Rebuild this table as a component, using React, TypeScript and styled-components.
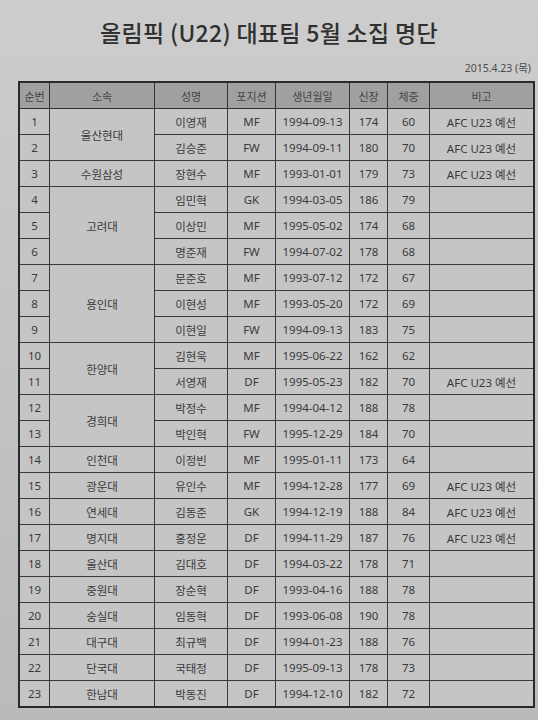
import React from 'react';
import styled, { createGlobalStyle } from 'styled-components';

const GlobalStyle = createGlobalStyle`
  html, body {
    margin: 0;
    padding: 0;
  }
  body {
    width: 538px;
    height: 720px;
    overflow: hidden;
    background: linear-gradient(180deg, #cdcdcd 0%, #c4c4c4 45%, #bababa 100%);
    font-family: "Noto Sans", "Noto Sans CJK KR", sans-serif;
    color: #333;
  }
`;

const Page = styled.div`
  display: flex;
  flex-direction: column;
  padding: 17px 0 0 0;
`;

const Title = styled.h1`
  margin: 0;
  text-align: center;
  font-family: "Noto Sans CJK KR", sans-serif;
  font-size: 23px;
  font-weight: 500;
  line-height: 30px;
  color: #303030;
  letter-spacing: 0.3px;
`;

const DateLine = styled.div`
  margin: 14px 7px 0 0;
  text-align: right;
  font-family: "Noto Sans", "Noto Sans CJK KR", sans-serif;
  font-size: 10.5px;
  line-height: 14px;
  color: #4a4a4a;
`;

const Sheet = styled.table`
  margin: 6px 0 0 18px;
  width: 506px;
  border-collapse: collapse;
  table-layout: fixed;
  border: 2px solid #2a2a2a;
`;

const HeadCell = styled.th<{ $w: number }>`
  width: ${(p) => p.$w}px;
  height: 25px;
  padding: 0;
  background: #a0a0a0;
  border: 1px solid #333;
  font-family: "Noto Sans CJK KR", sans-serif;
  font-size: 11px;
  font-weight: 400;
  color: #444;
  text-align: center;
`;

const Cell = styled.td<{ $kr?: boolean }>`
  height: 25px;
  padding: 0;
  border: 1px solid #3a3a3a;
  background: #c5c5c5;
  font-family: ${(p) =>
    p.$kr ? '"Noto Sans CJK KR", sans-serif' : '"Noto Sans", "Noto Sans CJK KR", sans-serif'};
  font-size: 11.5px;
  color: #3a3a3a;
  text-align: center;
  white-space: nowrap;
`;

const columns: [string, number][] = [
  ['순번', 29],
  ['소속', 104],
  ['성명', 72],
  ['포지션', 47],
  ['생년월일', 73],
  ['신장', 37],
  ['체중', 41],
  ['비고', 103],
];

type Player = {
  team?: string;
  span?: number;
  name: string;
  pos: string;
  birth: string;
  height: number;
  weight: number;
  note?: boolean;
};

const players: Player[] = [
  { team: '울산현대', span: 2, name: '이영재', pos: 'MF', birth: '1994-09-13', height: 174, weight: 60, note: true },
  { name: '김승준', pos: 'FW', birth: '1994-09-11', height: 180, weight: 70, note: true },
  { team: '수원삼성', name: '장현수', pos: 'MF', birth: '1993-01-01', height: 179, weight: 73, note: true },
  { team: '고려대', span: 3, name: '임민혁', pos: 'GK', birth: '1994-03-05', height: 186, weight: 79 },
  { name: '이상민', pos: 'MF', birth: '1995-05-02', height: 174, weight: 68 },
  { name: '명준재', pos: 'FW', birth: '1994-07-02', height: 178, weight: 68 },
  { team: '용인대', span: 3, name: '문준호', pos: 'MF', birth: '1993-07-12', height: 172, weight: 67 },
  { name: '이현성', pos: 'MF', birth: '1993-05-20', height: 172, weight: 69 },
  { name: '이현일', pos: 'FW', birth: '1994-09-13', height: 183, weight: 75 },
  { team: '한양대', span: 2, name: '김현욱', pos: 'MF', birth: '1995-06-22', height: 162, weight: 62 },
  { name: '서영재', pos: 'DF', birth: '1995-05-23', height: 182, weight: 70, note: true },
  { team: '경희대', span: 2, name: '박정수', pos: 'MF', birth: '1994-04-12', height: 188, weight: 78 },
  { name: '박인혁', pos: 'FW', birth: '1995-12-29', height: 184, weight: 70 },
  { team: '인천대', name: '이정빈', pos: 'MF', birth: '1995-01-11', height: 173, weight: 64 },
  { team: '광운대', name: '유인수', pos: 'MF', birth: '1994-12-28', height: 177, weight: 69, note: true },
  { team: '연세대', name: '김동준', pos: 'GK', birth: '1994-12-19', height: 188, weight: 84, note: true },
  { team: '명지대', name: '홍정운', pos: 'DF', birth: '1994-11-29', height: 187, weight: 76, note: true },
  { team: '울산대', name: '김대호', pos: 'DF', birth: '1994-03-22', height: 178, weight: 71 },
  { team: '중원대', name: '장순혁', pos: 'DF', birth: '1993-04-16', height: 188, weight: 78 },
  { team: '숭실대', name: '임동혁', pos: 'DF', birth: '1993-06-08', height: 190, weight: 78 },
  { team: '대구대', name: '최규백', pos: 'DF', birth: '1994-01-23', height: 188, weight: 76 },
  { team: '단국대', name: '국태정', pos: 'DF', birth: '1995-09-13', height: 178, weight: 73 },
  { team: '한남대', name: '박동진', pos: 'DF', birth: '1994-12-10', height: 182, weight: 72 },
];

export default function App() {
  return (
    <Page>
      <GlobalStyle />
      <Title>올림픽 (U22) 대표팀 5월 소집 명단</Title>
      <DateLine>2015.4.23 (목)</DateLine>
      <Sheet>
        <thead>
          <tr>
            {columns.map(([label, w]) => (
              <HeadCell key={label} $w={w}>
                {label}
              </HeadCell>
            ))}
          </tr>
        </thead>
        <tbody>
          {players.map((p, i) => (
            <tr key={p.name}>
              <Cell>{i + 1}</Cell>
              {p.team && (
                <Cell $kr rowSpan={p.span ?? 1}>
                  {p.team}
                </Cell>
              )}
              <Cell $kr>{p.name}</Cell>
              <Cell>{p.pos}</Cell>
              <Cell>{p.birth}</Cell>
              <Cell>{p.height}</Cell>
              <Cell>{p.weight}</Cell>
              <Cell>{p.note ? 'AFC U23 예선' : ''}</Cell>
            </tr>
          ))}
        </tbody>
      </Sheet>
    </Page>
  );
}
